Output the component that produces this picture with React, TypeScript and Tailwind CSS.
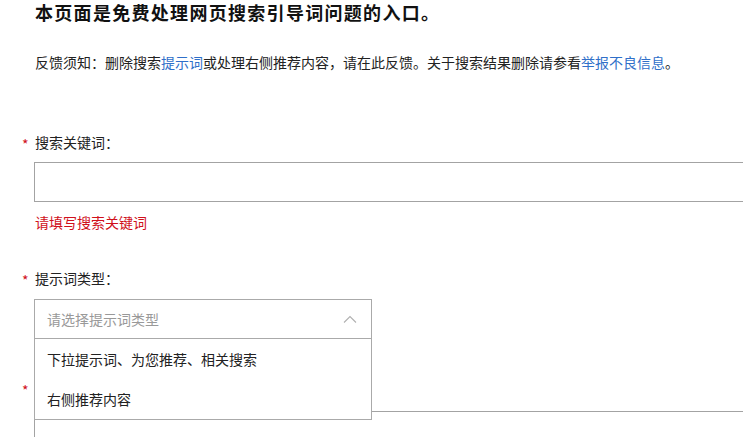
import { useState } from "react";

const FONT = { fontFamily: '"Noto Sans CJK SC", "Noto Sans", sans-serif' };

function Label({ text }: { text?: string }) {
  return (
    <div className="-ml-[13px] flex h-[20px] items-center text-[14px] leading-[20px] text-[#222]">
      <span className="w-[13px] pt-[3px] text-[14px] text-[#d0101b]">*</span>
      {text && <span>{text}</span>}
    </div>
  );
}

function ChevronUp() {
  return (
    <svg width="14" height="8" viewBox="0 0 14 8" aria-hidden>
      <polyline points="1,7.5 7,1.5 13,7.5" fill="none" stroke="#b0b0b0" strokeWidth="1.1" />
    </svg>
  );
}

export default function App() {
  const [open] = useState(true);
  const options = ["下拉提示词、为您推荐、相关搜索", "右侧推荐内容"];

  return (
    <div className="h-[437px] w-[743px] overflow-hidden bg-white pl-[35px]" style={FONT}>
      <h1 className="text-[18px] font-bold leading-[24px] tracking-[1.3px] text-[#111]">
        本页面是免费处理网页搜索引导词问题的入口。
      </h1>

      <p className="mt-[28px] text-[14px] leading-[20px] text-[#222]">
        反馈须知：删除搜索<a className="text-[#2f6fc9]">提示词</a>或处理右侧推荐内容，请在此反馈。关于搜索结果删除请参看
        <a className="text-[#2f6fc9]">举报不良信息</a>。
      </p>

      <div className="mt-[60px]">
        <Label text="搜索关键词：" />
        <div className="mt-[10px] -ml-px h-[40px] w-[760px] border border-[#a3a3a3]" />
        <div className="mt-[10px] text-[14px] leading-[20px] text-[#d0101b]">请填写搜索关键词</div>
      </div>

      <div className="mt-[36px]">
        <Label text="提示词类型：" />
        <div className="relative z-10 mt-[11px] -ml-px h-[40px] w-[338px] border border-[#aaaaaa] bg-white">
          <div className="flex h-full items-center justify-between pl-[12px] pr-[14px]">
            <span className="text-[14px] text-[#999]">请选择提示词类型</span>
            <ChevronUp />
          </div>
          {open && (
            <ul className="absolute left-[-1px] top-[38px] w-[338px] border border-[#aaaaaa] bg-white">
              {options.map((o) => (
                <li key={o} className="flex h-[40px] items-center pl-[12px] text-[14px] text-[#222]">
                  {o}
                </li>
              ))}
            </ul>
          )}
        </div>
      </div>

      <div className="mt-[39px]">
        <Label />
        <div className="mt-[13px] -ml-px h-[80px] w-[760px] border border-[#a3a3a3]" />
      </div>
    </div>
  );
}
